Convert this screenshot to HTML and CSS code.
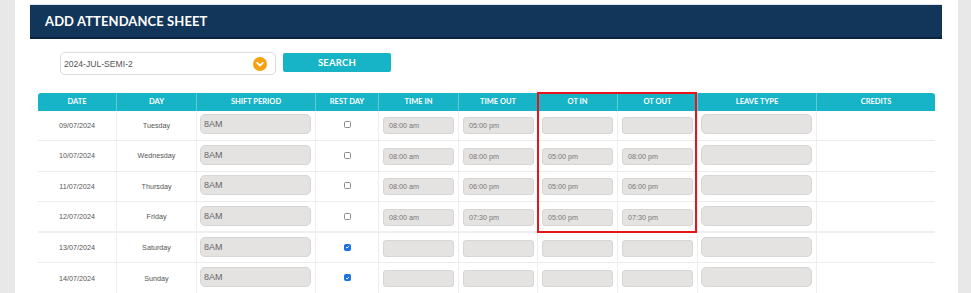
FILE: index.html
```html
<!DOCTYPE html>
<html lang="en">
<head>
<meta charset="utf-8">
<title>Add Attendance Sheet</title>
<link rel="stylesheet" href="styles.css">
</head>
<body>
<div class="page">
  <div class="titlebar"><h1>ADD ATTENDANCE SHEET</h1></div>

  <div class="toolbar">
    <div class="select">
      <span class="select-text">2024-JUL-SEMI-2</span>
      <span class="chev"><svg width="14" height="14" viewBox="0 0 14 14"><circle cx="7" cy="7" r="7" fill="#f5a10f"/><path d="M4.2 5.8 L7 8.6 L9.8 5.8" fill="none" stroke="#fff" stroke-width="1.8" stroke-linecap="round" stroke-linejoin="round"/></svg></span>
    </div>
    <button class="search">SEARCH</button>
  </div>

  <div class="sheet">
    <div class="row thead">
      <div class="c">DATE</div>
      <div class="c">DAY</div>
      <div class="c">SHIFT PERIOD</div>
      <div class="c">REST DAY</div>
      <div class="c">TIME IN</div>
      <div class="c">TIME OUT</div>
      <div class="c">OT IN</div>
      <div class="c">OT OUT</div>
      <div class="c">LEAVE TYPE</div>
      <div class="c">CREDITS</div>
    </div>

    <div class="row tr">
      <div class="c">09/07/2024</div>
      <div class="c">Tuesday</div>
      <div class="c l"><div class="f big">8AM</div></div>
      <div class="c"><span class="cb"></span></div>
      <div class="c l"><div class="f">08:00 am</div></div>
      <div class="c l"><div class="f">05:00 pm</div></div>
      <div class="c l"><div class="f"></div></div>
      <div class="c l"><div class="f"></div></div>
      <div class="c l"><div class="f big"></div></div>
      <div class="c"></div>
    </div>

    <div class="row tr">
      <div class="c">10/07/2024</div>
      <div class="c">Wednesday</div>
      <div class="c l"><div class="f big">8AM</div></div>
      <div class="c"><span class="cb"></span></div>
      <div class="c l"><div class="f">08:00 am</div></div>
      <div class="c l"><div class="f">08:00 pm</div></div>
      <div class="c l"><div class="f">05:00 pm</div></div>
      <div class="c l"><div class="f">08:00 pm</div></div>
      <div class="c l"><div class="f big"></div></div>
      <div class="c"></div>
    </div>

    <div class="row tr">
      <div class="c">11/07/2024</div>
      <div class="c">Thursday</div>
      <div class="c l"><div class="f big">8AM</div></div>
      <div class="c"><span class="cb"></span></div>
      <div class="c l"><div class="f">08:00 am</div></div>
      <div class="c l"><div class="f">06:00 pm</div></div>
      <div class="c l"><div class="f">05:00 pm</div></div>
      <div class="c l"><div class="f">06:00 pm</div></div>
      <div class="c l"><div class="f big"></div></div>
      <div class="c"></div>
    </div>

    <div class="row tr thick">
      <div class="c">12/07/2024</div>
      <div class="c">Friday</div>
      <div class="c l"><div class="f big">8AM</div></div>
      <div class="c"><span class="cb"></span></div>
      <div class="c l"><div class="f">08:00 am</div></div>
      <div class="c l"><div class="f">07:30 pm</div></div>
      <div class="c l"><div class="f">05:00 pm</div></div>
      <div class="c l"><div class="f">07:30 pm</div></div>
      <div class="c l"><div class="f big"></div></div>
      <div class="c"></div>
    </div>

    <div class="row tr">
      <div class="c">13/07/2024</div>
      <div class="c">Saturday</div>
      <div class="c l"><div class="f big">8AM</div></div>
      <div class="c"><span class="cb on"><svg width="6" height="6" viewBox="0 0 6 6"><path d="M1.2 3.1 L2.5 4.3 L4.9 1.6" fill="none" stroke="#fff" stroke-width="1.1"/></svg></span></div>
      <div class="c l"><div class="f"></div></div>
      <div class="c l"><div class="f"></div></div>
      <div class="c l"><div class="f"></div></div>
      <div class="c l"><div class="f"></div></div>
      <div class="c l"><div class="f big"></div></div>
      <div class="c"></div>
    </div>

    <div class="row tr">
      <div class="c">14/07/2024</div>
      <div class="c">Sunday</div>
      <div class="c l"><div class="f big">8AM</div></div>
      <div class="c"><span class="cb on"><svg width="6" height="6" viewBox="0 0 6 6"><path d="M1.2 3.1 L2.5 4.3 L4.9 1.6" fill="none" stroke="#fff" stroke-width="1.1"/></svg></span></div>
      <div class="c l"><div class="f"></div></div>
      <div class="c l"><div class="f"></div></div>
      <div class="c l"><div class="f"></div></div>
      <div class="c l"><div class="f"></div></div>
      <div class="c l"><div class="f big"></div></div>
      <div class="c"></div>
    </div>

    <div class="highlight"></div>
  </div>
</div>
</body>
</html>
```

FILE: styles.css
```css
html, body {
  margin: 0;
  padding: 0;
}
body {
  background: #e8e8e8;
  font-family: "Liberation Sans", Arial, sans-serif;
  height: 293px;
  overflow: hidden;
}
.page {
  margin-left: 15px;
  width: 943px;
  height: 293px;
  background: #ffffff;
  padding-top: 5px;
  box-sizing: border-box;
  overflow: hidden;
}
.titlebar {
  margin-left: 15px;
  width: 912px;
  height: 34px;
  background: #12365a;
  border-bottom: 2px solid #0a2340;
  box-sizing: border-box;
  display: flex;
  align-items: center;
  padding-left: 15px;
  box-shadow: 0 -1px 0 #dfe4ea;
}
.titlebar h1 {
  margin: 0;
  font-family: Lato, "Open Sans", sans-serif;
  font-weight: 700;
  font-size: 13px;
  color: #ffffff;
  letter-spacing: 0.1px;
}
.toolbar {
  display: flex;
  align-items: flex-start;
  gap: 7px;
  margin: 13px 0 0 45px;
}
.select {
  width: 216px;
  height: 23px;
  border: 1px solid #dcdcdc;
  border-radius: 5px;
  box-sizing: border-box;
  display: flex;
  align-items: center;
  justify-content: space-between;
  padding: 0 8px 0 3px;
}
.select-text {
  font-size: 8.6px;
  color: #555555;
}
.chev {
  display: flex;
}
.search {
  width: 108px;
  height: 19px;
  margin-top: 0.5px;
  background: #17b3c7;
  border: 0;
  border-radius: 2px;
  color: #ffffff;
  font-family: Lato, "Open Sans", sans-serif;
  font-weight: 700;
  font-size: 9.5px;
  letter-spacing: 0.2px;
  padding: 0;
}
.sheet {
  position: relative;
  margin: 17.5px 0 0 23px;
  width: 897px;
}
.row {
  display: grid;
  grid-template-columns: 78px 80px 119px 63px 80px 79px 80px 80px 119px 119px;
}
.thead {
  height: 18px;
  background: #17b3c7;
  border-radius: 3px 3px 0 0;
}
.thead .c {
  display: flex;
  align-items: center;
  justify-content: center;
  color: #ffffff;
  font-family: Lato, "Open Sans", sans-serif;
  font-weight: 700;
  font-size: 7.5px;
  border-left: 1px solid #62c9d7;
}
.thead .c:first-child {
  border-left: 0;
}
.tr {
  height: 30.6px;
  border-bottom: 1px solid #ececec;
  box-sizing: border-box;
}
.tr.thick {
  border-bottom: 2px solid #efefef;
}
.tr .c {
  display: flex;
  align-items: center;
  justify-content: center;
  border-left: 1px solid #eeeeee;
  font-size: 7.2px;
  color: #555555;
}
.tr .c:first-child {
  border-left: 0;
}
.tr .c.l {
  justify-content: flex-start;
}
.f {
  box-sizing: border-box;
  width: 71px;
  height: 17px;
  margin-left: 4px;
  margin-top: 1px;
  background: #e5e2e2;
  border: 1px solid #d8d5d5;
  border-radius: 3px;
  font-size: 7.2px;
  color: #777777;
  padding-left: 5px;
  display: flex;
  align-items: center;
}
.f.big {
  width: 111px;
  height: 20px;
  margin-left: 3px;
  margin-top: 0;
  margin-bottom: 2px;
  border-radius: 5px;
  font-size: 9px;
  color: #666666;
  padding-left: 3px;
}
.cb {
  box-sizing: border-box;
  width: 7px;
  height: 7px;
  border: 1px solid #8c8c8c;
  border-radius: 1.5px;
  background: #ffffff;
  display: flex;
  align-items: center;
  justify-content: center;
  margin-bottom: 1px;
}
.cb.on {
  background: #1b6fe3;
  border-color: #1b6fe3;
}
.cb svg {
  display: block;
}
.highlight {
  position: absolute;
  left: 498.5px;
  top: -0.5px;
  width: 160.5px;
  height: 141px;
  border: 2px solid #e8141b;
  box-sizing: border-box;
  pointer-events: none;
}
```
